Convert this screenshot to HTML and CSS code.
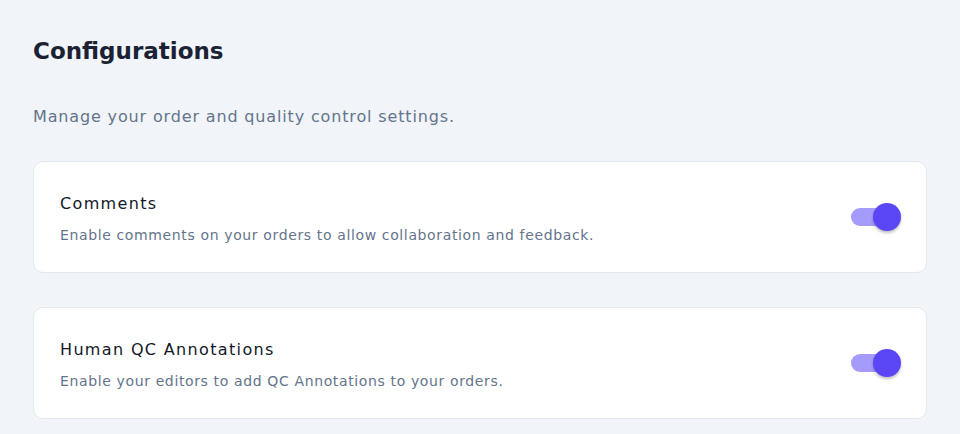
FILE: index.html
```html
<!DOCTYPE html>
<html lang="en">
<head>
<meta charset="utf-8">
<title>Configurations</title>
<link rel="stylesheet" href="styles.css">
</head>
<body>
<main class="page">
  <h1 class="title">Configurations</h1>
  <p class="subtitle">Manage your order and quality control settings.</p>
  <section class="card">
    <div class="card-text">
      <h2 class="card-title">Comments</h2>
      <p class="card-desc">Enable comments on your orders to allow collaboration and feedback.</p>
    </div>
    <div class="switch on" role="switch" aria-checked="true"><span class="knob"></span></div>
  </section>
  <section class="card">
    <div class="card-text">
      <h2 class="card-title">Human QC Annotations</h2>
      <p class="card-desc">Enable your editors to add QC Annotations to your orders.</p>
    </div>
    <div class="switch on" role="switch" aria-checked="true"><span class="knob"></span></div>
  </section>
</main>
</body>
</html>
```
FILE: styles.css
```css
* { box-sizing: border-box; }
html, body { margin: 0; padding: 0; }
body {
  background: #f1f4f9;
  font-family: "DejaVu Sans", "Liberation Sans", sans-serif;
  color: #1e293b;
}
.page {
  padding: 36px 33px 0 33px;
  display: flex;
  flex-direction: column;
}
.title {
  margin: 0;
  font-size: 23px;
  line-height: 30px;
  font-weight: 700;
  color: #1a2233;
}
.subtitle {
  margin: 41px 0 0 0;
  font-size: 16px;
  line-height: 20px;
  letter-spacing: 0.85px;
  color: #64748b;
}
.card {
  margin-top: 34px;
  background: #ffffff;
  border: 1px solid #e3e8ef;
  border-radius: 10px;
  height: 112px;
  padding: 0 37px 0 26px;
  display: flex;
  align-items: center;
  justify-content: space-between;
}
.card + .card { margin-top: 34px; }
.card-text { display: flex; flex-direction: column; gap: 12px; padding-top: 4px; }
.card-title {
  margin: 0;
  font-size: 16px;
  line-height: 20px;
  font-weight: 400;
  letter-spacing: 1.35px;
  color: #111827;
}
.card-desc {
  margin: 0;
  font-size: 14px;
  line-height: 18px;
  letter-spacing: 0.63px;
  color: #64748b;
}
.switch {
  position: relative;
  width: 38px;
  height: 18px;
  border-radius: 9px;
  background: #a59bfb;
}
.knob {
  position: absolute;
  right: -12px;
  top: -5px;
  width: 28px;
  height: 28px;
  border-radius: 50%;
  background: #5b46f6;
  box-shadow: 0 2px 3px rgba(0,0,0,0.25);
}
```
